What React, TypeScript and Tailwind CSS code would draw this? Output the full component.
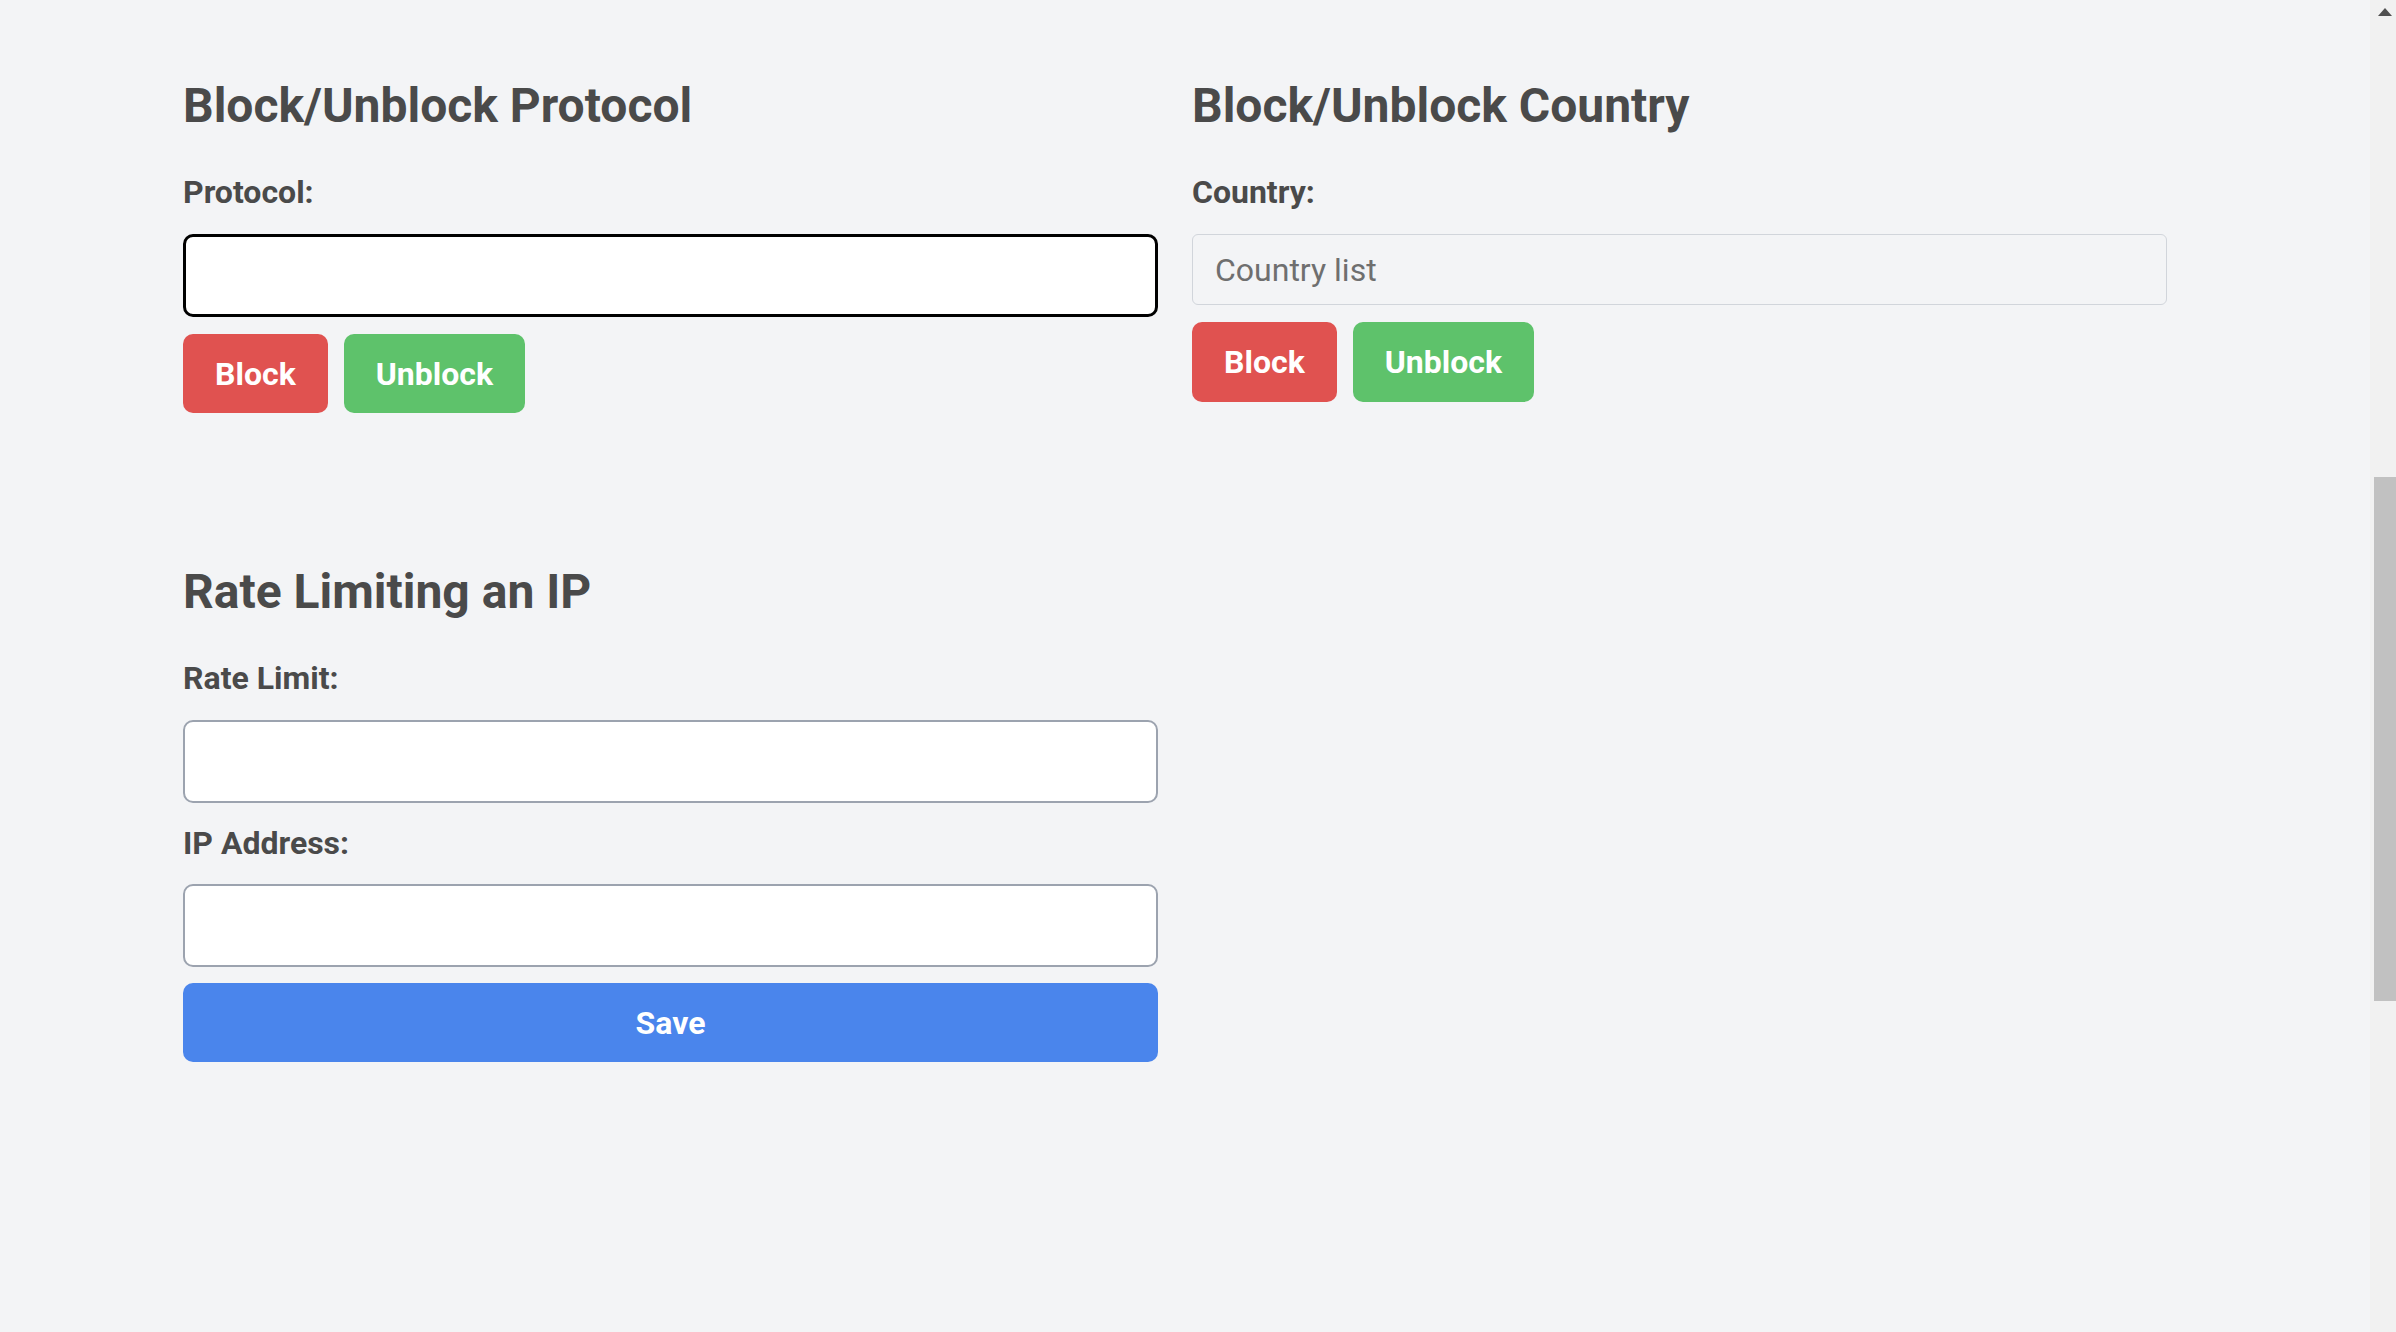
import { FC } from 'react';

const labelCls = 'block text-[32px] leading-[40px] font-bold text-[#4a4a4a]';
const headingCls = 'text-[48px] leading-[58px] font-bold text-[#4a4a4a]';

const ActionButtons: FC<{ className?: string; height: string }> = ({ className = '', height }) => (
  <div className={`flex gap-[16px] ${className}`}>
    <button className={`${height} px-[32px] rounded-[10px] bg-[#e05250] text-white text-[32px] font-bold`}>
      Block
    </button>
    <button className={`${height} px-[32px] rounded-[10px] bg-[#5ec26b] text-white text-[32px] font-bold`}>
      Unblock
    </button>
  </div>
);

const App: FC = () => {
  return (
    <div className="h-screen overflow-hidden bg-[#f3f4f6] flex font-['Roboto','Liberation_Sans',sans-serif]">
      <main className="flex-1 pl-[183px] pt-[77px]">
        <div className="grid grid-cols-[975px_975px] gap-x-[34px] items-start">
          {/* Protocolo */}
          <section>
            <h2 className={headingCls}>Block/Unblock Protocol</h2>
            <label className={`${labelCls} mt-[37px]`}>Protocol:</label>
            <input
              type="text"
              className="mt-[22px] block w-full h-[83px] rounded-[10px] border-[3px] border-black bg-white px-4 text-[32px] outline-none"
            />
            <ActionButtons className="mt-[17px]" height="h-[79px]" />
          </section>

          {/* País */}
          <section>
            <h2 className={headingCls}>Block/Unblock Country</h2>
            <label className={`${labelCls} mt-[37px]`}>Country:</label>
            <input
              type="text"
              placeholder="Country list"
              className="mt-[22px] block w-full h-[71px] rounded-[6px] border-[1.5px] border-[#d1d5db] bg-transparent px-[22px] text-[32px] text-[#4a4a4a] placeholder:text-[#6f6f6f] outline-none"
            />
            <ActionButtons className="mt-[17px]" height="h-[80px]" />
          </section>
        </div>

        {/* Limite de taxa */}
        <section className="mt-[150px] w-[975px]">
          <h2 className={headingCls}>Rate Limiting an IP</h2>
          <label className={`${labelCls} mt-[37px]`}>Rate Limit:</label>
          <input
            type="text"
            className="mt-[22px] block w-full h-[83px] rounded-[10px] border-2 border-[#9ca3af] bg-white px-4 text-[32px] outline-none"
          />
          <label className={`${labelCls} mt-[20px]`}>IP Address:</label>
          <input
            type="text"
            className="mt-[21px] block w-full h-[83px] rounded-[10px] border-2 border-[#9ca3af] bg-white px-4 text-[32px] outline-none"
          />
          <button className="mt-[16px] w-full h-[79px] rounded-[10px] bg-[#4a85ec] text-white text-[32px] font-bold">
            Save
          </button>
        </section>
      </main>

      {/* barra de rolagem */}
      <aside className="w-[26px] h-full bg-[#f1f1f1] flex flex-col items-end">
        <div className="w-full flex justify-center pt-[8px] pl-[4px]">
          <div className="w-0 h-0 border-l-[7px] border-r-[7px] border-b-[8px] border-l-transparent border-r-transparent border-b-[#505050]" />
        </div>
        <div className="mt-[461px] w-[22px] h-[524px] bg-[#c1c1c1]" />
      </aside>
    </div>
  );
};

export default App;
